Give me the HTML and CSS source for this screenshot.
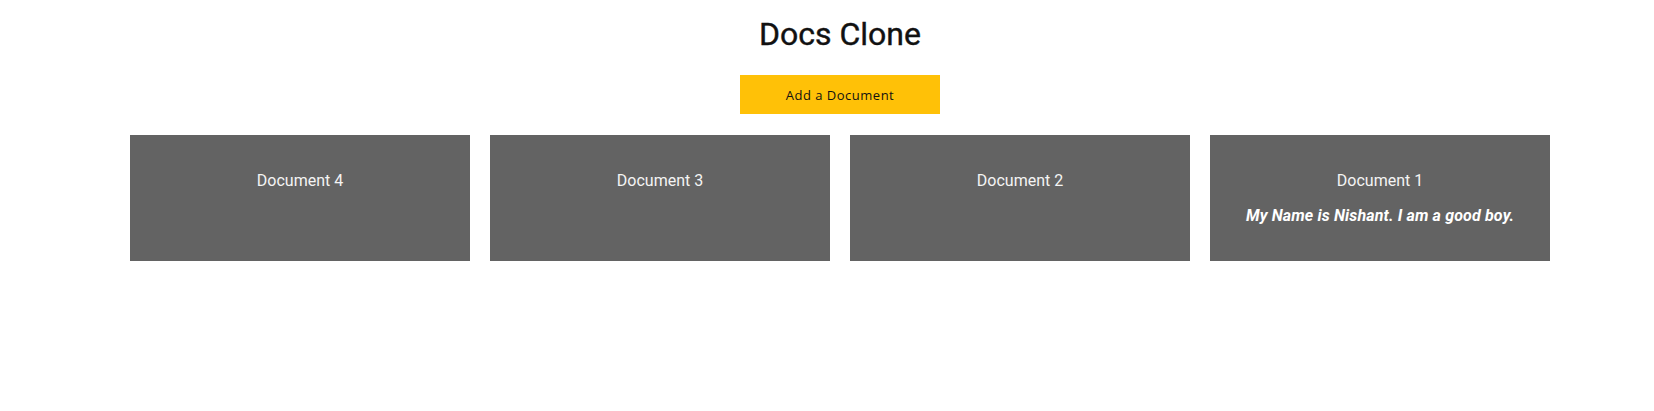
FILE: index.html
```html
<!DOCTYPE html>
<html>
<head>
<meta charset="utf-8">
<link rel="stylesheet" href="styles.css">
</head>
<body>
<div class="page">
  <h1 class="title">Docs Clone</h1>
  <div class="actions">
    <button class="add-btn">Add a Document</button>
  </div>
  <div class="grid">
    <div class="card"><div class="card-title">Document 4</div></div>
    <div class="card"><div class="card-title">Document 3</div></div>
    <div class="card"><div class="card-title">Document 2</div></div>
    <div class="card">
      <div class="card-title">Document 1</div>
      <div class="card-body">My Name is Nishant. I am a good boy.</div>
    </div>
  </div>
</div>
</body>
</html>
```
FILE: styles.css
```css
html, body {
  margin: 0;
  padding: 0;
  background: #fff;
}
.page {
  width: 1420px;
  margin-left: 130px;
  display: flex;
  flex-direction: column;
  align-items: center;
  font-family: Roboto, "Liberation Sans", sans-serif;
}
.title {
  margin: 16px 0 0 0;
  font-size: 32px;
  font-weight: 400;
  line-height: 36px;
  color: #111;
  -webkit-text-stroke: 0.4px #111;
}
.actions {
  margin-top: 23px;
}
.add-btn {
  width: 200px;
  height: 39px;
  border: none;
  background: #ffc107;
  color: #111;
  font-family: "Open Sans", "Liberation Sans", sans-serif;
  font-size: 13px;
  letter-spacing: 0.5px;
  padding: 0;
}
.grid {
  margin-top: 21px;
  width: 100%;
  display: grid;
  grid-template-columns: repeat(4, 340px);
  gap: 20px;
}
.card {
  height: 126px;
  background: #636363;
  color: #f4f4f4;
  display: flex;
  flex-direction: column;
  align-items: center;
  padding-top: 36px;
  box-sizing: border-box;
}
.card-title {
  font-size: 16px;
  line-height: 20px;
}
.card-body {
  margin-top: 15px;
  font-size: 16px;
  line-height: 20px;
  font-style: italic;
  font-weight: 700;
  letter-spacing: 0.15px;
  color: #fff;
}
```
